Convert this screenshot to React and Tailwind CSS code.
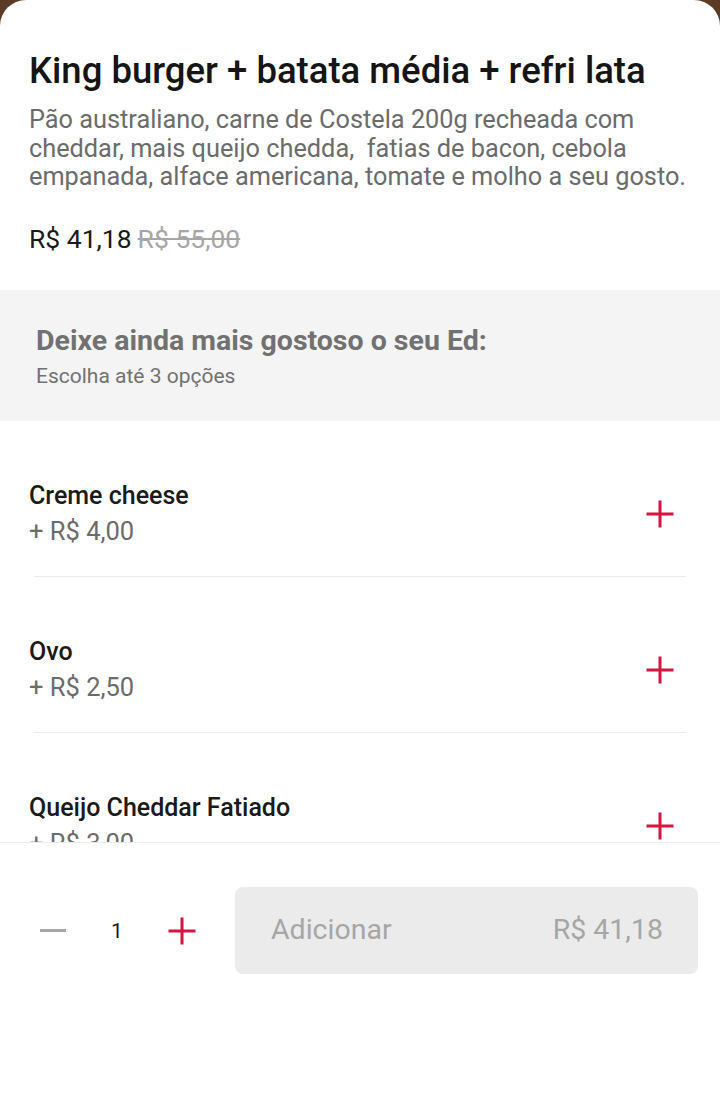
import React from "react";

const Plus = ({ className = "" }) => (
  <svg width="28" height="28" viewBox="0 0 28 28" className={className}>
    <path d="M14 0.5V27.5M0.5 14H27.5" stroke="#d81340" strokeWidth="3" fill="none" />
  </svg>
);

const items = [
  { name: "Creme cheese", price: "+ R$ 4,00" },
  { name: "Ovo", price: "+ R$ 2,50" },
  { name: "Queijo Cheddar Fatiado", price: "+ R$ 3,00" },
];

export default function App() {
  return (
    <div
      className="w-[720px] h-[1102px] bg-[#5b3b26] overflow-hidden"
      style={{ fontFamily: "Roboto, 'Noto Sans', sans-serif" }}
    >
      <div className="h-full bg-white rounded-t-[26px] flex flex-col">
        <div className="h-[842px] overflow-hidden flex flex-col shrink-0">
          <div className="px-[29px] pt-[51px] pb-[35px] shrink-0">
            <h1 className="text-[36.5px] leading-[40px] font-medium text-[#151515] whitespace-nowrap">
              King burger + batata média + refri lata
            </h1>
            <p className="mt-[15px] text-[25.3px] leading-[28.5px] text-[#6b6b6b] whitespace-nowrap">
              Pão australiano, carne de Costela 200g recheada com
              <br />
              cheddar, mais queijo chedda,&nbsp; fatias de bacon, cebola
              <br />
              empanada, alface americana, tomate e molho a seu gosto.
            </p>
            <div className="mt-[31px] flex items-baseline gap-[6px] text-[26.5px] leading-[32px]">
              <span className="text-[#1a1a1a]">R$ 41,18</span>
              <span className="text-[#a6a6a6] line-through">R$ 55,00</span>
            </div>
          </div>
          <div className="bg-[#f4f4f4] h-[131px] shrink-0 px-[36px] pt-[33px]">
            <div className="text-[28.5px] leading-[36px] font-bold text-[#717171] whitespace-nowrap">
              Deixe ainda mais gostoso o seu Ed:
            </div>
            <div className="mt-[4px] text-[21px] leading-[26px] text-[#717171]">
              Escolha até 3 opções
            </div>
          </div>
          <div className="flex flex-col shrink-0">
            {items.map((it) => (
              <div key={it.name} className="shrink-0">
                <div className="flex items-center justify-between pl-[29px] pr-[46px] pt-[58px] pb-[27px]">
                  <div className="flex flex-col">
                    <span className="text-[25px] leading-[34px] font-medium text-[#1a1a1a]">
                      {it.name}
                    </span>
                    <span className="text-[25.5px] leading-[36px] text-[#6b6b6b]">
                      {it.price}
                    </span>
                  </div>
                  <Plus />
                </div>
                <div className="mx-[34px] h-px bg-[#ececec]" />
              </div>
            ))}
          </div>
        </div>
        <div className="flex-1 border-t border-[#ececec] px-[22px] pt-[44px]">
          <div className="flex items-center">
            <div className="flex items-center w-[213px] shrink-0">
              <div className="w-[26px] ml-[18px] h-[3px] bg-[#a6a6a6]" />
              <span className="ml-[34px] w-[34px] text-center text-[21px] leading-[28px] text-[#1a1a1a]">1</span>
              <Plus className="ml-[34px]" />
            </div>
            <div className="flex-1 h-[87px] bg-[#ebebeb] rounded-[8px] flex items-center justify-between pl-[36px] pr-[35px] text-[28.5px] text-[#a6a6a6]">
              <span>Adicionar</span>
              <span>R$ 41,18</span>
            </div>
          </div>
        </div>
      </div>
    </div>
  );
}
